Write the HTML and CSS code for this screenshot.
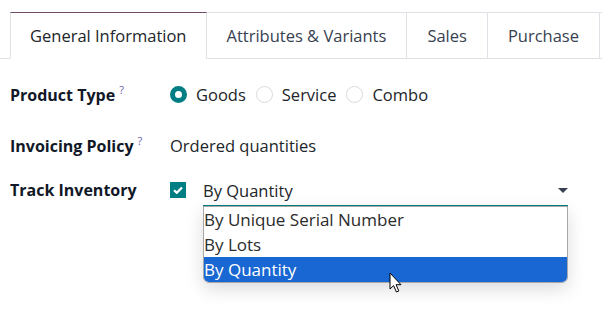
FILE: index.html
```html
<!DOCTYPE html>
<html lang="en">
<head>
  <meta charset="UTF-8">
  <meta name="viewport" content="width=device-width, initial-scale=1.0">
  <title>Product Form</title>
  <link rel="stylesheet" href="styles.css">
</head>
<body>
  <nav class="tabs">
    <div class="tab-gap"></div>
    <div class="tab active">General Information</div>
    <div class="tab">Attributes &amp; Variants</div>
    <div class="tab">Sales</div>
    <div class="tab">Purchase</div>
    <div class="tab tab-more"></div>
  </nav>
  <main class="sheet">
    <div class="row row-type">
      <div class="label">Product Type<sup>?</sup></div>
      <div class="value radios">
        <span class="radio checked"></span><span class="radio-text">Goods</span>
        <span class="radio"></span><span class="radio-text">Service</span>
        <span class="radio"></span><span class="radio-text">Combo</span>
      </div>
    </div>
    <div class="row row-policy">
      <div class="label">Invoicing Policy<sup>?</sup></div>
      <div class="value">Ordered quantities</div>
    </div>
    <div class="row row-track">
      <div class="label">Track Inventory</div>
      <span class="checkbox">
        <svg width="10" height="8" viewBox="0 0 10 8"><path d="M1 4.2 L3.8 6.8 L9 1.4" fill="none" stroke="#fff" stroke-width="2.2"/></svg>
      </span>
      <div class="select-wrap">
        <div class="select">
          <span>By Quantity</span>
          <span class="caret"></span>
        </div>
        <ul class="dropdown">
          <li>By Unique Serial Number</li>
          <li>By Lots</li>
          <li class="selected">By Quantity</li>
        </ul>
        <svg class="cursor" width="14" height="22" viewBox="0 0 14 22">
          <path d="M1 1 L1 17 L4.6 13.6 L7.4 20 L9.8 19 L7.1 12.7 L12 12.7 Z" fill="#fff" stroke="#000" stroke-width="1" stroke-linejoin="round"/>
        </svg>
      </div>
    </div>
  </main>
</body>
</html>
```

FILE: styles.css
```css
html, body {
  height: 100%;
}
body {
  margin: 0;
  min-height: 311px;
  background: #fff;
  font-family: "Open Sans", "Noto Sans", sans-serif;
  font-size: 16.5px;
  color: #212529;
}
.tabs {
  display: flex;
  margin-top: 12px;
  padding-top: 0;
  height: 47px;
}
body::before {
  content: "";
  display: table;
}
.tab-gap {
  flex: none;
  width: 10px;
  border-bottom: 1px solid #dee2e6;
}
.tab {
  flex: none;
  display: flex;
  align-items: center;
  padding: 0 20px;
  border-top: 1px solid #dee2e6;
  border-right: 1px solid #dee2e6;
  border-bottom: 1px solid #dee2e6;
  color: #374151;
  white-space: nowrap;
}
.tab.active {
  padding: 0 19px;
  border-top: 1px solid #714b67;
  border-left: 1px solid #dee2e6;
  border-bottom: 1px solid transparent;
  color: #212529;
}
.tab-more {
  flex: 1;
  padding: 0;
  border-right: none;
}
.sheet {
  padding: 0 10px;
}
.row {
  display: flex;
  align-items: center;
}
.row-type {
  margin-top: 22px;
  height: 26px;
}
.row-policy {
  margin-top: 25px;
  height: 26px;
}
.row-track {
  margin-top: 18px;
  align-items: flex-start;
}
.label {
  width: 160px;
  flex: none;
  font-size: 16px;
  font-weight: 700;
  color: #111827;
}
.row-track .label {
  margin-top: 3px;
}
.label sup {
  font-weight: 400;
  font-size: 11px;
  color: #6b5fa8;
  margin-left: 4px;
  vertical-align: 7px;
}
.value {
  display: flex;
  align-items: center;
}
.radio {
  width: 17px;
  height: 17px;
  box-sizing: border-box;
  border: 1px solid #d8dadd;
  border-radius: 50%;
  margin-right: 9px;
}
.radio.checked {
  border: 5px solid #017e84;
}
.radio-text {
  margin-right: 10px;
}
.checkbox {
  flex: none;
  width: 16px;
  height: 16px;
  margin-top: 6px;
  background: #017e84;
  display: flex;
  align-items: center;
  justify-content: center;
  margin-right: 17px;
}
.select-wrap {
  position: relative;
  width: 365px;
}
.select {
  height: 31px;
  box-sizing: border-box;
  display: flex;
  align-items: center;
  border-bottom: 2px solid #017e84;
}
.caret {
  margin-left: auto;
  width: 0;
  height: 0;
  border-left: 5px solid transparent;
  border-right: 5px solid transparent;
  border-top: 5px solid #374151;
}
.dropdown {
  margin: -1px 0 0;
  padding: 0;
  list-style: none;
  background: #fff;
  border: 1px solid #a8a8a8;
  border-radius: 0 0 6px 6px;
  box-shadow: 0 6px 18px rgba(0, 0, 0, 0.14);
  overflow: hidden;
  position: relative;
}
.dropdown li {
  height: 25px;
  line-height: 25px;
  font-size: 17px;
  color: #2b2b2b;
}
.dropdown li.selected {
  background: #1967d2;
  color: #fff;
}
.cursor {
  position: absolute;
  z-index: 2;
  left: 186px;
  top: 96px;
}
```
